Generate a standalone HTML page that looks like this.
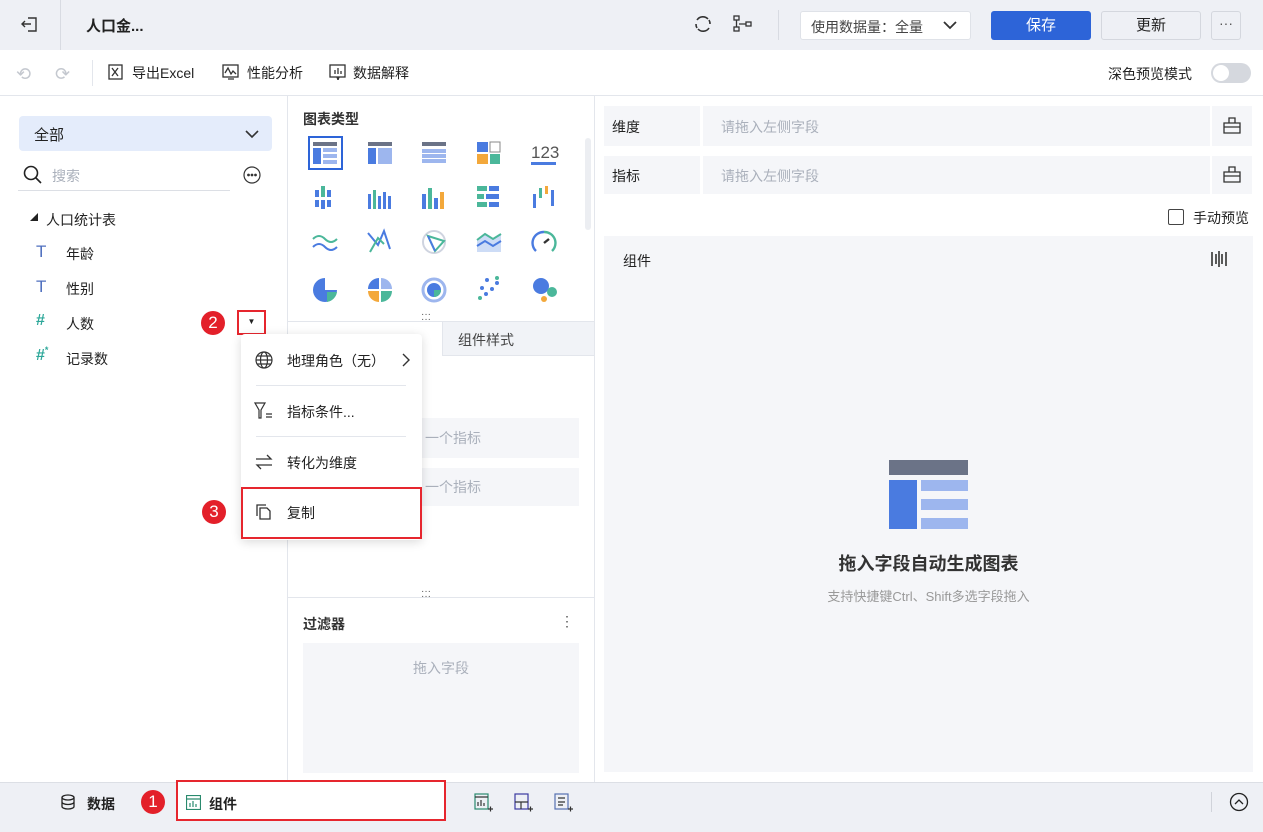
<!DOCTYPE html><html><head><meta charset="utf-8"><style>
*{box-sizing:border-box;margin:0;padding:0}
body{width:1263px;height:832px;overflow:hidden;font-family:"Liberation Sans","Noto Sans CJK SC",sans-serif;font-size:14px;color:#222;background:#fff;position:relative}
.a{position:absolute}
.g{color:#aab0bb}
</style></head><body>
<!-- top bar -->
<div class="a" style="left:0;top:0;width:1263px;height:50px;background:#eef0f5"></div>
<div class="a" style="left:60px;top:0;width:1px;height:50px;background:#d8dbe2"></div>
<svg class="a" style="left:20px;top:14px" width="20" height="20" viewBox="0 0 20 20" fill="none" stroke="#333" stroke-width="1.4"><path d="M8 4h8v13H8M2 10h9M5 7l-3 3 3 3"/></svg>
<div class="a" style="left:86px;top:15px;font-weight:bold;font-size:15px">人口金...</div>
<svg class="a" style="left:693px;top:14px" width="20" height="20" viewBox="0 0 20 20" fill="none" stroke="#333" stroke-width="1.6"><path d="M4 6a7 7 0 0 1 11-1M16 14a7 7 0 0 1-11 1M3 10a7 7 0 0 0 1 4M17 10a7 7 0 0 0-1-4"/></svg>
<svg class="a" style="left:732px;top:14px" width="22" height="20" viewBox="0 0 22 20" fill="none" stroke="#333" stroke-width="1.3"><rect x="2" y="2" width="5" height="4"/><rect x="2" y="13" width="5" height="4"/><rect x="14" y="8" width="5" height="4"/><path d="M4.5 6v7M7 10h7"/></svg>
<div class="a" style="left:778px;top:10px;width:1px;height:30px;background:#d8dbe2"></div>
<div class="a" style="left:800px;top:11px;width:171px;height:29px;background:#fff;border:1px solid #dfe2e8;border-radius:3px;padding:5px 10px;color:#444">使用数据量：全量<svg style="position:absolute;left:142px;top:8px" width="14" height="10" fill="none" stroke="#333" stroke-width="1.8"><path d="M1 2l6 6 6-6"/></svg></div>
<div class="a" style="left:991px;top:11px;width:100px;height:29px;background:#2d64d8;border-radius:3px;color:#fff;text-align:center;line-height:29px;font-size:15px">保存</div>
<div class="a" style="left:1101px;top:11px;width:100px;height:29px;background:#eef0f5;border:1px solid #d4d7de;border-radius:3px;text-align:center;line-height:27px;font-size:15px">更新</div>
<div class="a" style="left:1211px;top:11px;width:30px;height:29px;border:1px solid #d4d7de;border-radius:3px;text-align:center;line-height:22px;color:#555">···</div>
<!-- toolbar -->
<div class="a" style="left:0;top:95px;width:1263px;height:1px;background:#e3e6ec"></div>
<div class="a" style="left:16px;top:64px;color:#c4c8cf;font-size:18px">⟲</div>
<div class="a" style="left:55px;top:64px;color:#c4c8cf;font-size:18px">⟳</div>
<div class="a" style="left:92px;top:60px;width:1px;height:26px;background:#e3e6ec"></div>
<svg class="a" style="left:108px;top:64px" width="16" height="16" fill="none" stroke="#333" stroke-width="1.3"><rect x="1" y="1" width="13" height="14"/><path d="M4 4l6 8M10 4l-6 8"/></svg>
<div class="a" style="left:132px;top:63px">导出Excel</div>
<svg class="a" style="left:222px;top:64px" width="18" height="16" fill="none" stroke="#333" stroke-width="1.3"><rect x="1" y="1" width="15" height="12"/><path d="M3 9l3-5 3 6 2-3 3 3M6 15h6"/></svg>
<div class="a" style="left:247px;top:63px">性能分析</div>
<svg class="a" style="left:329px;top:64px" width="18" height="16" fill="none" stroke="#333" stroke-width="1.3"><rect x="1" y="1" width="15" height="12"/><path d="M6 10V6M9 10V4M12 10V7M8 13l1 3 1-3"/></svg>
<div class="a" style="left:353px;top:63px">数据解释</div>
<div class="a" style="left:1108px;top:64px">深色预览模式</div>
<div class="a" style="left:1211px;top:63px;width:40px;height:20px;border-radius:10px;background:#d5d8de"><div style="position:absolute;left:2px;top:2px;width:16px;height:16px;border-radius:50%;background:#fff"></div></div>
<!-- left panel -->
<div class="a" style="left:287px;top:96px;width:1px;height:686px;background:#e3e6ec"></div>
<div class="a" style="left:19px;top:116px;width:253px;height:35px;background:#e4ecfb;border-radius:4px;padding:8px 15px;font-size:15px">全部<svg style="position:absolute;left:226px;top:13px" width="14" height="10" fill="none" stroke="#333" stroke-width="1.6"><path d="M1 2l6 6 6-6"/></svg></div>
<svg class="a" style="left:23px;top:165px" width="20" height="20" fill="none" stroke="#222" stroke-width="1.6"><circle cx="8" cy="8" r="6.5"/><path d="M13 13l5 5"/></svg>
<div class="a g" style="left:52px;top:166px">搜索</div>
<div class="a" style="left:18px;top:190px;width:212px;height:1px;background:#dcdfe5"></div>
<svg class="a" style="left:243px;top:166px" width="18" height="18" fill="none" stroke="#333" stroke-width="1.2"><circle cx="9" cy="9" r="8"/><circle cx="5.5" cy="9" r=".8" fill="#333"/><circle cx="9" cy="9" r=".8" fill="#333"/><circle cx="12.5" cy="9" r=".8" fill="#333"/></svg>
<div class="a" style="left:30px;top:212px;font-size:8px">◢</div>
<div class="a" style="left:46px;top:210px">人口统计表</div>
<div class="a" style="left:36px;top:242px;color:#4f6fbf;font-size:17px">T</div><div class="a" style="left:66px;top:244px">年龄</div>
<div class="a" style="left:36px;top:277px;color:#4f6fbf;font-size:17px">T</div><div class="a" style="left:66px;top:279px">性别</div>
<div class="a" style="left:36px;top:312px;color:#2ea89a;font-size:16px;font-weight:bold">#</div><div class="a" style="left:66px;top:314px">人数</div>
<div class="a" style="left:36px;top:347px;color:#2ea89a;font-size:16px;font-weight:bold">#<span style="font-size:9px;position:relative;top:-7px">*</span></div><div class="a" style="left:66px;top:349px">记录数</div>
<div class="a" style="left:201px;top:311px;width:24px;height:24px;border-radius:50%;background:#e3202a;color:#fff;text-align:center;line-height:24px;font-size:17px">2</div>
<div class="a" style="left:237px;top:310px;width:29px;height:25px;border:2px solid #e6262e;text-align:center;line-height:19px;font-size:8px">▼</div>
<!-- middle -->
<div class="a" style="left:303px;top:109px;font-weight:bold;color:#333">图表类型</div>
<div class="a" style="left:308px;top:136px;width:35px;height:34px;border:2px solid #2d64d8"></div>
<svg class="a" style="left:300px;top:136px" width="270" height="170">
<g transform="translate(13,6)"><rect width="24" height="4" fill="#6b7387"/><rect y="6" width="8" height="16" fill="#4a7be0"/><rect x="10" y="6" width="14" height="4" fill="#9db6ee"/><rect x="10" y="12" width="14" height="4" fill="#9db6ee"/><rect x="10" y="18" width="14" height="4" fill="#9db6ee"/></g>
<g transform="translate(68,6)"><rect width="24" height="4" fill="#6b7387"/><rect y="6" width="8" height="16" fill="#4a7be0"/><rect x="10" y="6" width="14" height="16" fill="#9db6ee"/></g>
<g transform="translate(122,6)"><rect width="24" height="4" fill="#6b7387"/><rect y="7" width="24" height="4" fill="#9db6ee"/><rect y="12" width="24" height="4" fill="#9db6ee"/><rect y="17" width="24" height="4" fill="#9db6ee"/></g>
<g transform="translate(177,6)"><rect width="11" height="10" fill="#4a7be0"/><rect x="13" width="10" height="10" fill="none" stroke="#888"/><rect y="12" width="11" height="10" fill="#f3a83b"/><rect x="13" y="12" width="10" height="10" fill="#4bb79a"/></g>
<text x="231" y="22" font-size="17" fill="#555" font-family="Liberation Sans">123</text><rect x="231" y="26" width="25" height="3" fill="#4a7be0"/>
<g transform="translate(15,50)" fill="#4a7be0"><rect x="0" y="4" width="4" height="7"/><rect x="6" y="0" width="4" height="11" fill="#4bb79a"/><rect x="12" y="4" width="4" height="7"/><rect x="0" y="14" width="4" height="7"/><rect x="6" y="14" width="4" height="9"/><rect x="12" y="14" width="4" height="7"/></g>
<g transform="translate(68,50)" fill="#4a7be0"><rect y="8" width="3" height="15"/><rect x="5" y="4" width="3" height="19" fill="#4bb79a"/><rect x="10" y="10" width="3" height="13"/><rect x="15" y="6" width="3" height="17"/><rect x="20" y="10" width="3" height="13"/></g>
<g transform="translate(122,50)" fill="#4a7be0"><rect y="8" width="4" height="15"/><rect x="6" y="2" width="4" height="21" fill="#4bb79a"/><rect x="12" y="12" width="4" height="11"/><rect x="18" y="6" width="4" height="17" fill="#f3a83b"/></g>
<g transform="translate(177,50)" fill="#4bb79a"><rect width="10" height="5"/><rect x="12" width="10" height="5" fill="#4a7be0"/><rect y="8" width="7" height="5"/><rect x="9" y="8" width="13" height="5" fill="#4a7be0"/><rect y="16" width="10" height="5"/><rect x="12" y="16" width="10" height="5" fill="#4a7be0"/></g>
<g transform="translate(233,50)"><rect y="8" width="3" height="14" fill="#4a7be0"/><rect x="6" y="2" width="3" height="10" fill="#4bb79a"/><rect x="12" y="0" width="3" height="8" fill="#f3a83b"/><rect x="18" y="4" width="3" height="16" fill="#4a7be0"/></g>
<g transform="translate(13,97)" fill="none" stroke-width="2"><path d="M0 6q6-6 12 0t12 0" stroke="#4bb79a"/><path d="M0 14q6-6 12 0t12 0" stroke="#4a7be0"/></g>
<g transform="translate(68,94)" fill="none" stroke-width="2"><path d="M0 3l10 12 6-14 6 18" stroke="#4a7be0"/><path d="M2 22l8-14 6 6" stroke="#4bb79a"/></g>
<g transform="translate(122,94)" fill="none" stroke-width="2"><circle cx="12" cy="12" r="11" stroke="#cfd4e0"/><path d="M6 6l16 5-9 10z" stroke="#4bb79a"/><path d="M6 6l7 15" stroke="#4a7be0"/></g>
<g transform="translate(177,96)"><path d="M0 8l8-6 8 5 8-5v18H0z" fill="#cddcf6"/><path d="M0 8l8-6 8 5 8-5" stroke="#4bb79a" stroke-width="2" fill="none"/><path d="M0 14l8-5 8 5 8-5" stroke="#4a7be0" stroke-width="2" fill="none"/></g>
<g transform="translate(232,95)" fill="none" stroke-width="2.4"><path d="M4 20A11 11 0 0 1 12 1" stroke="#4a7be0"/><path d="M12 1A11 11 0 0 1 20 20" stroke="#4bb79a"/><path d="M12 12l5-4" stroke="#333"/></g>
<g transform="translate(13,142)"><path d="M12 0A12 12 0 1 0 24 12H12z" fill="#4a7be0"/><path d="M14 14h10a12 12 0 0 1-10 10z" fill="#4bb79a"/></g>
<g transform="translate(68,142)"><path d="M11 0v11H0A11 11 0 0 1 11 0z" fill="#4a7be0"/><path d="M13 0a11 11 0 0 1 11 11H13z" fill="#9db6ee"/><path d="M11 13v11A11 11 0 0 1 0 13z" fill="#f3a83b"/><path d="M13 13h11a11 11 0 0 1-11 11z" fill="#4bb79a"/></g>
<g transform="translate(122,142)"><circle cx="12" cy="12" r="11" fill="none" stroke="#9db6ee" stroke-width="3"/><circle cx="12" cy="12" r="7" fill="#4a7be0"/><path d="M12 12h7a7 7 0 0 1-7 7z" fill="#4bb79a"/></g>
<g transform="translate(177,142)" fill="#4a7be0"><circle cx="3" cy="20" r="2" fill="#4bb79a"/><circle cx="9" cy="16" r="2"/><circle cx="5" cy="10" r="2"/><circle cx="15" cy="11" r="2"/><circle cx="20" cy="5" r="2"/><circle cx="20" cy="0" r="2" fill="#4bb79a"/><circle cx="10" cy="2" r="2"/></g>
<g transform="translate(232,142)"><circle cx="9" cy="8" r="8" fill="#4a7be0"/><circle cx="20" cy="14" r="5" fill="#4bb79a"/><circle cx="12" cy="21" r="3" fill="#f3a83b"/></g>
</svg>
<div class="a" style="left:585px;top:138px;width:6px;height:92px;background:#eceef2;border-radius:3px"></div>
<div class="a" style="left:288px;top:321px;width:306px;height:1px;background:#e3e6ec"></div>
<div class="a" style="left:421px;top:312px;font-size:10px;line-height:5px;color:#555">···<br>···</div>
<div class="a" style="left:442px;top:322px;width:152px;height:34px;background:#f1f3f7;border-left:1px solid #e3e6ec;border-bottom:1px solid #e3e6ec;padding:8px 15px;color:#444">组件样式</div>
<div class="a" style="left:395px;top:418px;width:184px;height:40px;background:#f5f6f9;padding:10px 30px" ><span class="g">一个指标</span></div>
<div class="a" style="left:395px;top:468px;width:184px;height:38px;background:#f5f6f9;padding:9px 30px"><span class="g">一个指标</span></div>
<div class="a" style="left:288px;top:597px;width:306px;height:1px;background:#e3e6ec"></div>
<div class="a" style="left:421px;top:589px;font-size:10px;line-height:5px;color:#555">···<br>···</div>
<div class="a" style="left:303px;top:614px;font-weight:bold;color:#333">过滤器</div>
<div class="a" style="left:560px;top:613px;color:#555">⋮</div>
<div class="a" style="left:303px;top:643px;width:276px;height:130px;background:#f5f6f9;text-align:center;padding-top:15px"><span class="g">拖入字段</span></div>
<div class="a" style="left:594px;top:96px;width:1px;height:686px;background:#e3e6ec"></div>
<!-- right -->
<div class="a" style="left:604px;top:106px;width:96px;height:40px;background:#f5f6f9;padding:11px 8px">维度</div>
<div class="a" style="left:703px;top:106px;width:507px;height:40px;background:#f5f6f9;padding:11px 18px"><span class="g">请拖入左侧字段</span></div>
<div class="a" style="left:1212px;top:106px;width:40px;height:40px;background:#f5f6f9"></div>
<div class="a" style="left:604px;top:156px;width:96px;height:38px;background:#f5f6f9;padding:10px 8px">指标</div>
<div class="a" style="left:703px;top:156px;width:507px;height:38px;background:#f5f6f9;padding:10px 18px"><span class="g">请拖入左侧字段</span></div>
<div class="a" style="left:1212px;top:156px;width:40px;height:38px;background:#f5f6f9"></div>
<svg class="a" style="left:1223px;top:117px" width="18" height="18" fill="none" stroke="#333" stroke-width="1.3"><path d="M1 6h16v10H1zM6 6V1h6v5M1 10h16"/></svg>
<svg class="a" style="left:1223px;top:166px" width="18" height="18" fill="none" stroke="#333" stroke-width="1.3"><path d="M1 6h16v10H1zM6 6V1h6v5M1 10h16"/></svg>
<div class="a" style="left:1168px;top:209px;width:16px;height:16px;border:1.5px solid #444;border-radius:2px"></div>
<div class="a" style="left:1193px;top:208px">手动预览</div>
<div class="a" style="left:604px;top:236px;width:649px;height:536px;background:#f5f6f9"></div>
<div class="a" style="left:623px;top:251px">组件</div>
<svg class="a" style="left:1210px;top:250px" width="18" height="18" stroke="#333" stroke-width="1.6"><path d="M2 2v14M6 4v10M9 1v16M12 4v10M16 2v14"/></svg>
<svg class="a" style="left:889px;top:460px" width="80" height="70"><rect width="79" height="15" fill="#6b7387"/><rect y="20" width="28" height="49" fill="#4a7be0"/><rect x="32" y="20" width="47" height="11" fill="#9db6ee"/><rect x="32" y="39" width="47" height="11" fill="#9db6ee"/><rect x="32" y="58" width="47" height="11" fill="#9db6ee"/></svg>
<div class="a" style="left:604px;top:550px;width:649px;text-align:center;font-size:18px;font-weight:bold;color:#333">拖入字段自动生成图表</div>
<div class="a" style="left:604px;top:586px;width:649px;text-align:center;font-size:13px;color:#999">支持快捷键Ctrl、Shift多选字段拖入</div>
<!-- menu -->
<div class="a" style="left:241px;top:334px;width:181px;height:206px;background:#fff;border-radius:4px;box-shadow:0 2px 10px rgba(0,0,0,.15)"></div>
<svg class="a" style="left:255px;top:351px" width="18" height="18" fill="none" stroke="#333" stroke-width="1.2"><circle cx="9" cy="9" r="8"/><ellipse cx="9" cy="9" rx="3.5" ry="8"/><path d="M1 9h16M2.5 5h13M2.5 13h13"/></svg>
<div class="a" style="left:287px;top:351px">地理角色（无）</div>
<svg class="a" style="left:401px;top:352px" width="10" height="16" fill="none" stroke="#333" stroke-width="1.4"><path d="M2 2l6 6-6 6"/></svg>
<div class="a" style="left:256px;top:385px;width:150px;height:1px;background:#e3e6ec"></div>
<svg class="a" style="left:254px;top:402px" width="20" height="18" fill="none" stroke="#333" stroke-width="1.2"><path d="M1 1h10L7 8v8L5 16V8zM12 12h6M12 15h6"/></svg>
<div class="a" style="left:287px;top:402px">指标条件...</div>
<div class="a" style="left:256px;top:436px;width:150px;height:1px;background:#e3e6ec"></div>
<svg class="a" style="left:255px;top:454px" width="18" height="16" fill="none" stroke="#333" stroke-width="1.3"><path d="M1 5h15l-4-4M17 11H2l4 4"/></svg>
<div class="a" style="left:287px;top:453px">转化为维度</div>
<svg class="a" style="left:256px;top:504px" width="16" height="16" fill="none" stroke="#333" stroke-width="1.3"><path d="M1 12V1h9M4 4h7l3 3v8H4z"/></svg>
<div class="a" style="left:287px;top:503px">复制</div>
<div class="a" style="left:241px;top:487px;width:181px;height:52px;border:2px solid #e6262e"></div>
<div class="a" style="left:202px;top:500px;width:24px;height:24px;border-radius:50%;background:#e3202a;color:#fff;text-align:center;line-height:24px;font-size:17px">3</div>
<!-- bottom -->
<div class="a" style="left:0;top:782px;width:1263px;height:50px;background:#eef0f5;border-top:1px solid #dcdfe5"></div>
<svg class="a" style="left:60px;top:794px" width="16" height="16" fill="none" stroke="#222" stroke-width="1.3"><ellipse cx="8" cy="3.5" rx="6" ry="2.5"/><path d="M2 3.5v9c0 1.4 2.7 2.5 6 2.5s6-1.1 6-2.5v-9M2 8c0 1.4 2.7 2.5 6 2.5s6-1.1 6-2.5"/></svg>
<div class="a" style="left:87px;top:794px;font-weight:bold">数据</div>
<div class="a" style="left:141px;top:790px;width:24px;height:24px;border-radius:50%;background:#e3202a;color:#fff;text-align:center;line-height:24px;font-size:17px">1</div>
<div class="a" style="left:176px;top:780px;width:270px;height:41px;background:#fff;border:2px solid #e6262e"></div>
<svg class="a" style="left:186px;top:795px" width="15" height="15" fill="none" stroke="#2a8a6e" stroke-width="1.2"><rect x=".5" y=".5" width="14" height="14"/><path d="M1 4h13M4 12V8M7 12V6M10 12V9"/></svg>
<div class="a" style="left:209px;top:794px;font-weight:bold">组件</div>
<svg class="a" style="left:474px;top:793px" width="20" height="20" fill="none" stroke="#2a8a6e" stroke-width="1.2"><rect x="1" y="1" width="13" height="15"/><path d="M1 4h13M4 13V9M7 13V7M10 13V10M14 16h5M16.5 13.5v5" stroke="#333"/></svg>
<svg class="a" style="left:514px;top:793px" width="20" height="20" fill="none" stroke="#3a3aa0" stroke-width="1.2"><rect x="1" y="1" width="13" height="15"/><path d="M1 9h13M7 9v7M14 16h5M16.5 13.5v5" stroke="#333"/></svg>
<svg class="a" style="left:554px;top:793px" width="20" height="20" fill="none" stroke="#5570b0" stroke-width="1.2"><rect x="1" y="1" width="13" height="15"/><path d="M4 5h7M4 9h7M4 12h5M14 16h5M16.5 13.5v5" stroke="#333"/></svg>
<div class="a" style="left:1211px;top:792px;width:1px;height:20px;background:#d0d3da"></div>
<svg class="a" style="left:1229px;top:792px" width="20" height="20" fill="none" stroke="#222" stroke-width="1.3"><circle cx="10" cy="10" r="8.5"/><path d="M6 12l4-4 4 4"/></svg>
</body></html>
